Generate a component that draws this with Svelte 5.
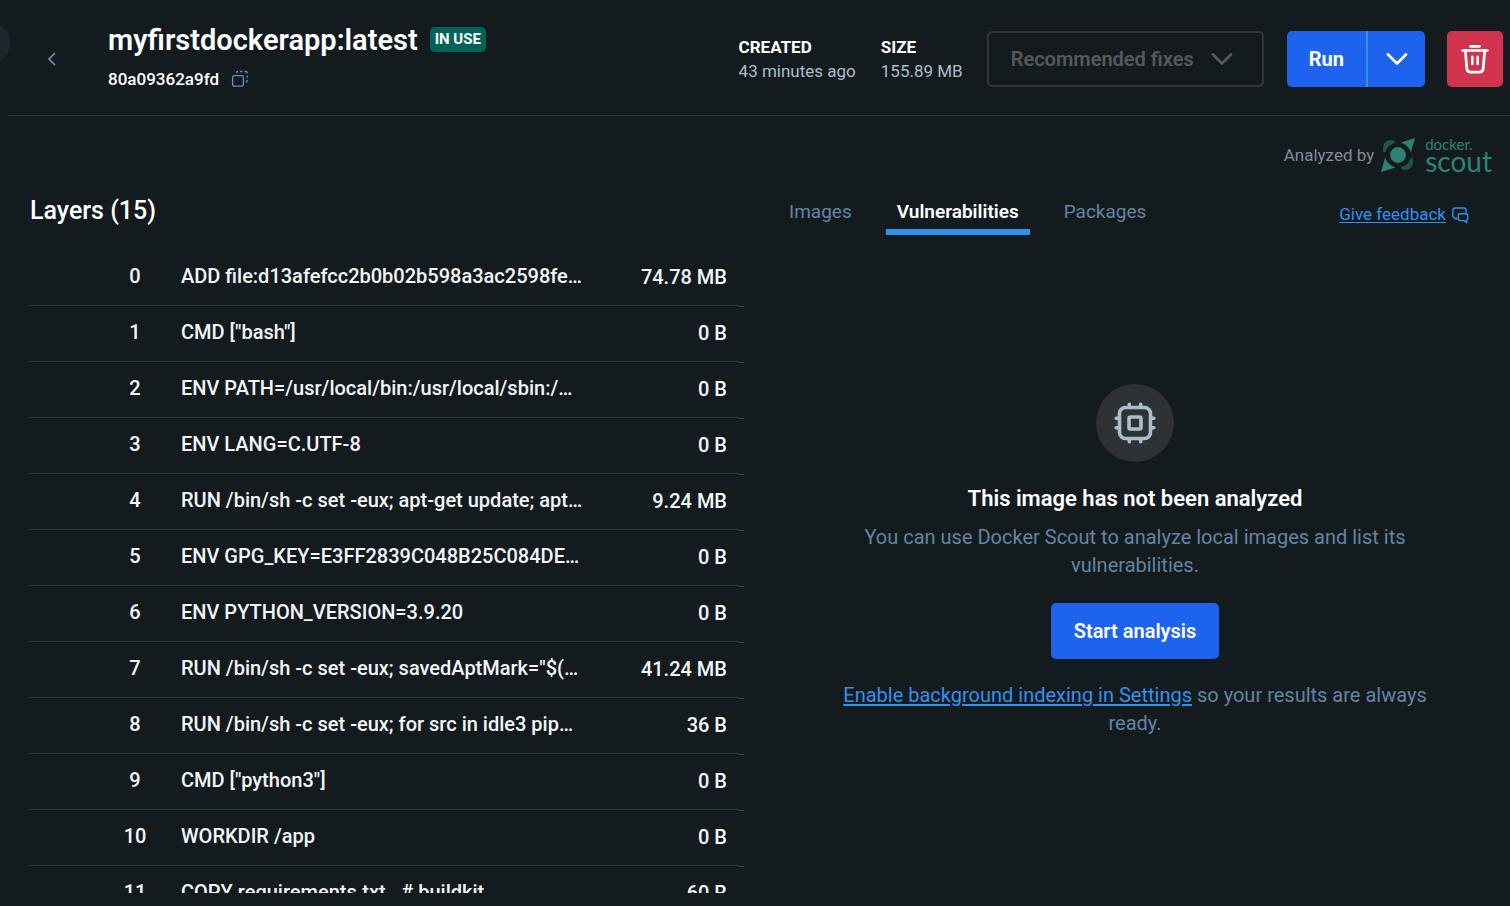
<script>
  const layers = [
    ['ADD file:d13afefcc2b0b02b598a3ac2598fe…', '74.78 MB'],
    ['CMD ["bash"]', '0 B'],
    ['ENV PATH=/usr/local/bin:/usr/local/sbin:/…', '0 B'],
    ['ENV LANG=C.UTF-8', '0 B'],
    ['RUN /bin/sh -c set -eux; apt-get update; apt…', '9.24 MB'],
    ['ENV GPG_KEY=E3FF2839C048B25C084DE…', '0 B'],
    ['ENV PYTHON_VERSION=3.9.20', '0 B'],
    ['RUN /bin/sh -c set -eux; savedAptMark="$(…', '41.24 MB'],
    ['RUN /bin/sh -c set -eux; for src in idle3 pip…', '36 B'],
    ['CMD ["python3"]', '0 B'],
    ['WORKDIR /app', '0 B'],
    ['COPY requirements.txt . # buildkit', '60 B']
  ];
  const tabs = ['Images', 'Vulnerabilities', 'Packages'];
  let active = $state('Vulnerabilities');
</script>

<div class="app">
  <header>
    <span class="edge"></span>
    <button class="back" aria-label="Back">
      <svg width="10" height="14" viewBox="0 0 10 14"><path d="M8 1 2 7l6 6" fill="none" stroke="currentColor" stroke-width="1.7" /></svg>
    </button>
    <div class="identity">
      <div class="title-line">
        <h1>myfirstdockerapp:latest</h1>
        <span class="badge">IN USE</span>
      </div>
      <div class="id-line">
        <span>80a09362a9fd</span>
        <button class="copy" aria-label="Copy image ID">
          <svg width="18" height="18" viewBox="0 0 18 18" fill="none" stroke="currentColor" stroke-width="1.3">
            <rect x="1.6" y="5.6" width="10.8" height="10.6" rx="1.6" />
            <path d="M5.7 3.2V2.8q0-1.3 1.3-1.3M9 1.5h2.4M13.4 1.5h1.4q1.4 0 1.4 1.4v.5M16.2 5.4v2.4M16.2 9.8v1q0 1.3-1.5 1.3" />
          </svg>
        </button>
      </div>
    </div>
    <dl>
      <div><dt>CREATED</dt><dd>43 minutes ago</dd></div>
      <div><dt>SIZE</dt><dd>155.89 MB</dd></div>
    </dl>
    <button class="fixes" disabled>
      Recommended fixes
      <svg width="22" height="14" viewBox="0 0 22 14"><path d="M2 2.5 11 11.5l9-9" fill="none" stroke="currentColor" stroke-width="2.8" stroke-linecap="round" stroke-linejoin="round" /></svg>
    </button>
    <div class="run">
      <button>Run</button>
      <button class="more" aria-label="Run options">
        <svg width="22" height="14" viewBox="0 0 22 14"><path d="M2 2.5 11 11.5l9-9" fill="none" stroke="currentColor" stroke-width="2.8" stroke-linecap="round" stroke-linejoin="round" /></svg>
      </button>
    </div>
    <button class="delete" aria-label="Delete image">
      <svg width="30" height="30" viewBox="0 0 30 30" fill="none" stroke="currentColor" stroke-linecap="round">
        <path d="M10.5 2.3h9" stroke-width="2.8" />
        <path d="M2.5 6.5h25" stroke-width="2.5" />
        <path d="m5.3 6.5 1.5 18q.3 3.7 4 3.7h8.4q3.7 0 4-3.700l1.500-18" stroke-width="2.8" />
        <path d="M12.3 12.8v7.2M17.7 12.8v7.2" stroke-width="2.6" />
      </svg>
    </button>
  </header>

  <main>
    <section class="layers">
      <h2>Layers (15)</h2>
      <div class="scroll">
        <table>
          <tbody>
            {#each layers as [command, size], i}
              <tr>
                <td class="num">{i}</td>
                <td class="cmd">{command}</td>
                <td class="size">{size}</td>
                <td class="tick"></td>
              </tr>
            {/each}
          </tbody>
        </table>
      </div>
    </section>

    <section class="details">
      <div class="scout">
        <span>Analyzed by</span>
        <svg class="mark" width="34" height="34" viewBox="0 0 34 34">
          <circle cx="17" cy="17" r="7.9" fill="#2d8274" />
          <path d="M34 0 19.7 4.6Q27.5 7 29.8 14.5ZM0 34l14.3-4.6Q6.5 27 4.2 19.5Z" fill="#2d8274" />
          <path d="M2 13.800V9.500Q2.500 2.700 9.500 2l3.500.6 1 2.300Q6.600 6.600 4.600 13.500L3 14.400ZM32 20.200v4.300q-.5 6.800-7.500 7.500l-3.500-.6-1-2.300q7.400-1.700 9.400-8.600l1.600-1Z" fill="#22534c" />
        </svg>
        <span class="wordmark"><span class="docker">docker.</span><span class="name">scout</span></span>
      </div>

      <div class="tabbar">
        <div class="tabs" role="tablist">
          {#each tabs as tab}
            <button role="tab" aria-selected={active === tab} class:active={active === tab} onclick={() => (active = tab)}>{tab}</button>
          {/each}
        </div>
        <a class="feedback" href="#feedback">
          <span>Give feedback</span>
          <svg width="17" height="17" viewBox="0 0 17 17" fill="none" stroke="currentColor" stroke-width="1.4" stroke-linejoin="round">
            <path d="M4.600 12.400 2.500 10.900Q.9 10.500.9 9V3.200Q.9 1 3.100 1h8.700Q14 1 14 3.200v3.400M4.600 12.400V10.600" />
            <path d="M8.300 6.800h5.500q2 0 2 2v2.800q0 1.400-1.200 1.800v2.300l-2.500-2.100H8.300q-2 0-2-2V8.800q0-2 2-2Z" />
          </svg>
        </a>
      </div>

      <div class="empty">
        <div class="chip">
          <svg width="42" height="42" viewBox="0 0 42 42" fill="none" stroke="currentColor" stroke-width="3.6" stroke-linecap="round">
            <rect x="5.5" y="5.5" width="31" height="31" rx="6" />
            <rect x="15" y="15" width="12" height="12" rx="1.5" />
            <path d="M15.300 2.200v2.300M26.700 2.200v2.300M15.300 37.500v2.300M26.700 37.500v2.300M2.200 16.300h2.300M2.200 25.700h2.300M37.500 16.300h2.300M37.500 25.700h2.300" />
          </svg>
        </div>
        <h3>This image has not been analyzed</h3>
        <p>You can use Docker Scout to analyze local images and list its vulnerabilities.</p>
        <button class="primary">Start analysis</button>
        <p><a href="#settings">Enable background indexing in Settings</a> so your results are always ready.</p>
      </div>
    </section>
  </main>
</div>

<style>
  :global(body) {
    background: #141b1f;
  }
  * {
    box-sizing: border-box;
  }
  .app {
    display: flex;
    flex-direction: column;
    height: 100vh;
    overflow: hidden;
    color: #fff;
    font: 400 20px/28px Roboto, sans-serif;
  }
  h1, h2, h3, p, dl, dd {
    margin: 0;
  }
  h1, h2, h3 {
    font-weight: 500;
  }
  button {
    padding: 0;
    border: 0;
    background: none;
    color: inherit;
    font: inherit;
    cursor: pointer;
  }
  svg {
    display: block;
    flex: none;
  }
  header {
    position: relative;
    display: flex;
    align-items: center;
    flex: none;
    height: 116px;
    margin-left: 8px;
    padding: 3px 7px 0 0;
    border-bottom: 1px solid #2c3236;
  }
  .edge {
    position: absolute;
    left: -38px;
    top: 22px;
    width: 40px;
    height: 42px;
    border-radius: 50%;
    background: #1c262d;
  }
  .back {
    margin: 0 51px 0 39px;
    color: #7090ad;
  }
  .identity {
    flex: 1;
    padding-bottom: 8px;
  }
  .title-line, .id-line {
    display: flex;
    align-items: center;
    gap: 12px;
  }
  h1 {
    font-size: 29px;
    font-weight: 600;
    line-height: 40px;
  }
  .badge {
    padding: 0 5px;
    border-radius: 5px;
    background: #046357;
    font-size: 15px;
    font-weight: 700;
    line-height: 25px;
  }
  .id-line {
    margin-top: 7px;
    font-size: 17px;
    font-weight: 500;
    line-height: 24px;
  }
  .copy {
    color: #7090ad;
  }
  dl {
    display: flex;
    gap: 25px;
    margin-right: 24px;
    font-size: 17px;
    line-height: 24px;
  }
  dt {
    font-weight: 700;
  }
  dd {
    color: #adbecb;
  }
  .fixes {
    display: flex;
    align-items: center;
    gap: 17px;
    height: 56px;
    padding: 0 29px 0 22px;
    border: 2px solid #313538;
    border-radius: 5px;
    color: #56595b;
    font-weight: 600;
    cursor: default;
  }
  .run {
    display: flex;
    height: 56px;
    margin: 0 22px 0 23px;
    border-radius: 5px;
    background: #1d63ed;
    font-weight: 700;
  }
  .run button {
    padding: 0 22px;
  }
  .run .more {
    padding: 0 17px 0 18px;
    border-left: 2px solid #3391ee;
  }
  .delete {
    display: grid;
    place-items: center;
    width: 56px;
    height: 56px;
    border-radius: 5px;
    background: #d1324c;
  }
  main {
    display: grid;
    grid-template-columns: 714px minmax(0, 1fr);
    column-gap: 23px;
    flex: 1;
    min-height: 0;
    padding: 0 7px 13px 30px;
  }
  .layers {
    display: flex;
    flex-direction: column;
    min-height: 0;
    padding-top: 78px;
  }
  h2 {
    font-size: 25px;
    line-height: 34px;
  }
  .scroll {
    flex: 1;
    min-height: 0;
    margin-top: 22px;
    overflow: hidden;
  }
  table {
    width: 100%;
    border-collapse: separate;
    border-spacing: 0;
    table-layout: fixed;
    font-weight: 500;
    color: #f4f5f6;
  }
  td {
    height: 56px;
    padding: 0 0 4px;
    border-bottom: 1px solid #2d3d47;
    white-space: nowrap;
  }
  .num {
    width: 151px;
    padding-left: 59px;
    text-align: center;
  }
  .cmd {
    overflow: hidden;
  }
  .size {
    width: 132px;
    padding: 0 12px 2px 0;
    text-align: right;
  }
  .tick {
    width: 5px;
    border: 0;
    box-shadow: 0 1px #44484b;
  }
  .details {
    display: flex;
    flex-direction: column;
    min-width: 0;
  }
  .scout {
    display: flex;
    justify-content: flex-end;
    align-items: center;
    height: 34px;
    margin: 22px 11px 0 0;
    color: #85899b;
    font-size: 17px;
  }
  .mark {
    margin: 0 10px 0 7px;
  }
  .wordmark {
    display: flex;
    flex-direction: column;
    color: #2d8274;
    font-family: Lato, sans-serif;
  }
  .docker {
    font-size: 15px;
    line-height: 13px;
  }
  .name {
    font-size: 28px;
    line-height: 21px;
  }
  .tabbar {
    display: flex;
    justify-content: space-between;
    align-items: center;
    height: 47px;
    margin-top: 16px;
    padding: 0 34px 0 11px;
  }
  .tabs {
    display: flex;
    gap: 23px;
    height: 100%;
    font-size: 19px;
  }
  .tabs button {
    padding: 6px 11px 0;
    border-bottom: 6px solid transparent;
    color: #6584a1;
  }
  .tabs .active {
    border-color: #3391ee;
    color: #fff;
    font-weight: 600;
  }
  a {
    color: #3391ee;
    text-decoration: underline;
    text-underline-offset: 2px;
  }
  .feedback {
    display: flex;
    align-items: center;
    gap: 6px;
    margin-top: 5px;
    font-size: 17px;
  }
  .feedback svg {
    margin-top: 2px;
  }
  .empty {
    display: flex;
    flex-direction: column;
    align-items: center;
    margin-top: 149px;
    padding: 0 56px;
    text-align: center;
    color: #6584a1;
  }
  .chip {
    display: grid;
    place-items: center;
    width: 78px;
    height: 78px;
    border-radius: 50%;
    background: #2e3235;
    color: #adbecb;
  }
  h3 {
    margin: 21px 0 9px;
    color: #fff;
    font-size: 22px;
    font-weight: 600;
    line-height: 31px;
  }
  .primary {
    height: 56px;
    margin: 24px 0 22px;
    padding: 0 23px;
    border-radius: 5px;
    background: #1d63ed;
    color: #fff;
    font-weight: 600;
  }
</style>
